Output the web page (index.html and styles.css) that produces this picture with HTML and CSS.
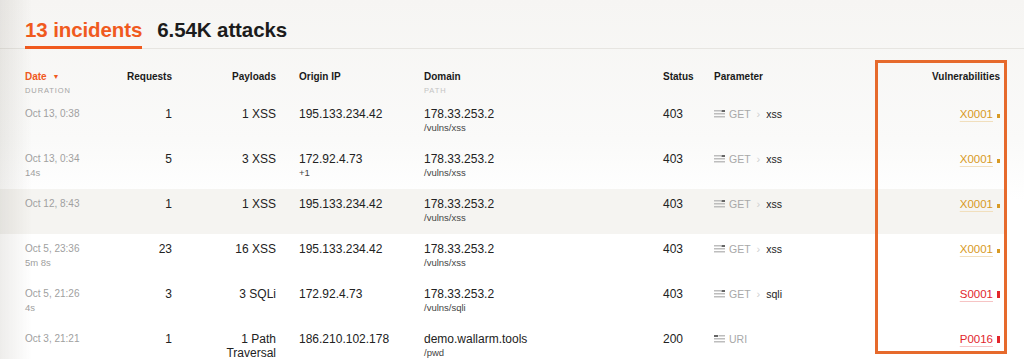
FILE: index.html
```html
<!DOCTYPE html>
<html lang="en">
	<head>
		<meta charset="UTF-8" />
		<meta name="viewport" content="width=device-width, initial-scale=1.0" />
		<title>Incidents</title>
		<link rel="stylesheet" href="styles.css">
	</head>

	<body>
		<div class="page">
			<div class="tabs">
				<div class="tab active">13 incidents</div>
				<div class="tab">6.54K attacks</div>
			</div>

			<div class="table">
				<div class="row head">
					<div class="cell">
						<div class="title sort">Date <span class="caret">&#9660;</span></div>
						<div class="caption">DURATION</div>
					</div>
					<div class="cell right"><div class="title">Requests</div></div>
					<div class="cell right"><div class="title">Payloads</div></div>
					<div class="cell"><div class="title">Origin IP</div></div>
					<div class="cell">
						<div class="title">Domain</div>
						<div class="caption light">PATH</div>
					</div>
					<div class="cell"><div class="title">Status</div></div>
					<div class="cell"><div class="title">Parameter</div></div>
					<div class="cell right"><div class="title">Vulnerabilities</div></div>
				</div>

				<div class="row">
					<div class="cell"><div class="date">Oct 13, 0:38</div></div>
					<div class="cell right"><div class="main">1</div></div>
					<div class="cell right payload"><div class="main">1 XSS</div></div>
					<div class="cell"><div class="main">195.133.234.42</div></div>
					<div class="cell"><div class="main">178.33.253.2</div><div class="sub">/vulns/xss</div></div>
					<div class="cell"><div class="main">403</div></div>
					<div class="cell"><div class="param"><svg class="ico" width="11" height="8" viewBox="0 0 11 8"><rect x="0" y="0" width="7" height="1.5" fill="#bdbdbd"/><rect x="7.5" y="0" width="3.5" height="2" fill="#666"/><rect x="0" y="3" width="11" height="1.5" fill="#bdbdbd"/><rect x="0" y="6" width="11" height="1.5" fill="#bdbdbd"/></svg><span class="method">GET</span><span class="sep">&rsaquo;</span><span class="pname">xss</span></div></div>
					<div class="cell right"><div class="main"><a class="vuln medium">X0001</a><span class="mark medium"></span></div></div>
				</div>

				<div class="row">
					<div class="cell"><div class="date">Oct 13, 0:34</div><div class="sub gray">14s</div></div>
					<div class="cell right"><div class="main">5</div></div>
					<div class="cell right payload"><div class="main">3 XSS</div></div>
					<div class="cell"><div class="main">172.92.4.73</div><div class="sub">+1</div></div>
					<div class="cell"><div class="main">178.33.253.2</div><div class="sub">/vulns/xss</div></div>
					<div class="cell"><div class="main">403</div></div>
					<div class="cell"><div class="param"><svg class="ico" width="11" height="8" viewBox="0 0 11 8"><rect x="0" y="0" width="7" height="1.5" fill="#bdbdbd"/><rect x="7.5" y="0" width="3.5" height="2" fill="#666"/><rect x="0" y="3" width="11" height="1.5" fill="#bdbdbd"/><rect x="0" y="6" width="11" height="1.5" fill="#bdbdbd"/></svg><span class="method">GET</span><span class="sep">&rsaquo;</span><span class="pname">xss</span></div></div>
					<div class="cell right"><div class="main"><a class="vuln medium">X0001</a><span class="mark medium"></span></div></div>
				</div>

				<div class="row hover">
					<div class="cell"><div class="date">Oct 12, 8:43</div></div>
					<div class="cell right"><div class="main">1</div></div>
					<div class="cell right payload"><div class="main">1 XSS</div></div>
					<div class="cell"><div class="main">195.133.234.42</div></div>
					<div class="cell"><div class="main">178.33.253.2</div><div class="sub">/vulns/xss</div></div>
					<div class="cell"><div class="main">403</div></div>
					<div class="cell"><div class="param"><svg class="ico" width="11" height="8" viewBox="0 0 11 8"><rect x="0" y="0" width="7" height="1.5" fill="#bdbdbd"/><rect x="7.5" y="0" width="3.5" height="2" fill="#666"/><rect x="0" y="3" width="11" height="1.5" fill="#bdbdbd"/><rect x="0" y="6" width="11" height="1.5" fill="#bdbdbd"/></svg><span class="method">GET</span><span class="sep">&rsaquo;</span><span class="pname">xss</span></div></div>
					<div class="cell right"><div class="main"><a class="vuln medium">X0001</a><span class="mark medium"></span></div></div>
				</div>

				<div class="row">
					<div class="cell"><div class="date">Oct 5, 23:36</div><div class="sub gray">5m 8s</div></div>
					<div class="cell right"><div class="main">23</div></div>
					<div class="cell right payload"><div class="main">16 XSS</div></div>
					<div class="cell"><div class="main">195.133.234.42</div></div>
					<div class="cell"><div class="main">178.33.253.2</div><div class="sub">/vulns/xss</div></div>
					<div class="cell"><div class="main">403</div></div>
					<div class="cell"><div class="param"><svg class="ico" width="11" height="8" viewBox="0 0 11 8"><rect x="0" y="0" width="7" height="1.5" fill="#bdbdbd"/><rect x="7.5" y="0" width="3.5" height="2" fill="#666"/><rect x="0" y="3" width="11" height="1.5" fill="#bdbdbd"/><rect x="0" y="6" width="11" height="1.5" fill="#bdbdbd"/></svg><span class="method">GET</span><span class="sep">&rsaquo;</span><span class="pname">xss</span></div></div>
					<div class="cell right"><div class="main"><a class="vuln medium">X0001</a><span class="mark medium"></span></div></div>
				</div>

				<div class="row">
					<div class="cell"><div class="date">Oct 5, 21:26</div><div class="sub gray">4s</div></div>
					<div class="cell right"><div class="main">3</div></div>
					<div class="cell right payload"><div class="main">3 SQLi</div></div>
					<div class="cell"><div class="main">172.92.4.73</div></div>
					<div class="cell"><div class="main">178.33.253.2</div><div class="sub">/vulns/sqli</div></div>
					<div class="cell"><div class="main">403</div></div>
					<div class="cell"><div class="param"><svg class="ico" width="11" height="8" viewBox="0 0 11 8"><rect x="0" y="0" width="7" height="1.5" fill="#bdbdbd"/><rect x="7.5" y="0" width="3.5" height="2" fill="#666"/><rect x="0" y="3" width="11" height="1.5" fill="#bdbdbd"/><rect x="0" y="6" width="11" height="1.5" fill="#bdbdbd"/></svg><span class="method">GET</span><span class="sep">&rsaquo;</span><span class="pname">sqli</span></div></div>
					<div class="cell right"><div class="main"><a class="vuln high">S0001</a><span class="mark high"></span></div></div>
				</div>

				<div class="row">
					<div class="cell"><div class="date">Oct 3, 21:21</div></div>
					<div class="cell right"><div class="main">1</div></div>
					<div class="cell right payload"><div class="main wrap">1 Path Traversal</div></div>
					<div class="cell"><div class="main">186.210.102.178</div></div>
					<div class="cell"><div class="main">demo.wallarm.tools</div><div class="sub">/pwd</div></div>
					<div class="cell"><div class="main">200</div></div>
					<div class="cell"><div class="param"><svg class="ico" width="11" height="8" viewBox="0 0 11 8"><rect x="0" y="0" width="4" height="2" fill="#666"/><rect x="4.5" y="0" width="6.5" height="1.5" fill="#bdbdbd"/><rect x="0" y="3" width="11" height="1.5" fill="#bdbdbd"/><rect x="0" y="6" width="11" height="1.5" fill="#bdbdbd"/></svg><span class="method">URI</span></div></div>
					<div class="cell right"><div class="main"><a class="vuln high">P0016</a><span class="mark high"></span></div></div>
				</div>
			</div>
		</div>

		<div class="highlight-box"></div>
	</body>
</html>
```

FILE: styles.css
```css
* {
	box-sizing: border-box;
}

body {
	margin: 0;
	font-family: "Liberation Sans", Arial, Helvetica, sans-serif;
	color: #222;
	background: linear-gradient(#f6f5f3 0, #fafaf9 140px, #fff 200px);
	min-height: 359px;
	overflow: hidden;
}

/* soft shadow along the left edge */
body::before {
	content: '';
	position: fixed;
	left: 0;
	top: 0;
	bottom: 0;
	width: 32px;
	background: linear-gradient(to right, rgba(60, 50, 30, 0.09), rgba(60, 50, 30, 0));
	pointer-events: none;
}

.tabs {
	display: flex;
	gap: 15px;
	padding: 18px 0 0 25px;
	border-bottom: 1px solid #e7e5e1;
}

.tab {
	font-size: 20.5px;
	font-weight: bold;
	line-height: 24px;
	color: #1c1c1c;
	padding-bottom: 4px;
	letter-spacing: -0.1px;
}
.tab.active {
	color: #f05a1e;
	border-bottom: 3px solid #f05a1e;
	margin-bottom: -1px;
}

.table {
	width: 1004px;
}

.row {
	display: grid;
	grid-template-columns: 75px 72px 104px 148px 239px 51px 161px 1fr;
	padding: 0 4px 0 25px;
	height: 45px;
}
.row.head {
	height: 50px;
	padding-top: 21px;
}
.row.hover {
	background: #f5f4f1;
}

.cell {
	padding-top: 7px;
	min-width: 0;
}
.head .cell {
	padding-top: 0;
}
.cell:nth-child(4) {
	padding-left: 23px;
}
.cell.payload {
	padding-left: 30px;
}
.right {
	text-align: right;
}

.title {
	font-size: 10px;
	font-weight: bold;
	line-height: 14px;
	color: #1a1a1a;
}
.title.sort {
	color: #f05a1e;
}
.caret {
	font-size: 7px;
	margin-left: 3px;
	vertical-align: 1px;
}
.caption {
	font-size: 7.5px;
	letter-spacing: 0.9px;
	line-height: 14px;
	color: #a5a5a5;
}
.caption.light {
	color: #c4c4c4;
}

.main {
	font-size: 12px;
	line-height: 16px;
	white-space: nowrap;
}
.main.wrap {
	white-space: normal;
	line-height: 14px;
	padding-top: 1px;
}
.date {
	font-size: 10px;
	line-height: 16px;
	color: #a0a0a0;
	white-space: nowrap;
}
.sub {
	font-size: 9.5px;
	line-height: 12px;
	color: #444;
}
.sub.gray {
	color: #a0a0a0;
}

.param {
	display: flex;
	align-items: center;
	height: 16px;
	font-size: 10.5px;
}
.ico {
	margin-right: 4px;
	margin-top: -1px;
}
.method {
	color: #a8a8a8;
}
.sep {
	color: #d0d0d0;
	margin: 0 6px;
	font-size: 11px;
}
.pname {
	color: #222;
}

.vuln {
	font-size: 11.5px;
	text-decoration: underline;
	text-underline-offset: 3px;
	text-decoration-thickness: 1px;
}
.vuln.medium {
	color: #d89a24;
	text-decoration-color: #f1dfbd;
}
.vuln.high {
	color: #e2262c;
	text-decoration-color: #f6c4c4;
}

.mark {
	display: inline-block;
	width: 3px;
	margin-left: 4px;
	vertical-align: baseline;
}
.mark.medium {
	height: 4px;
	background: #d89a24;
}
.mark.high {
	height: 7px;
	background: #e2262c;
}

/* orange annotation frame around the vulnerabilities column */
.highlight-box {
	position: absolute;
	left: 875px;
	top: 60px;
	width: 132px;
	height: 294px;
	border: 3px solid #e66a2c;
	pointer-events: none;
}
```
